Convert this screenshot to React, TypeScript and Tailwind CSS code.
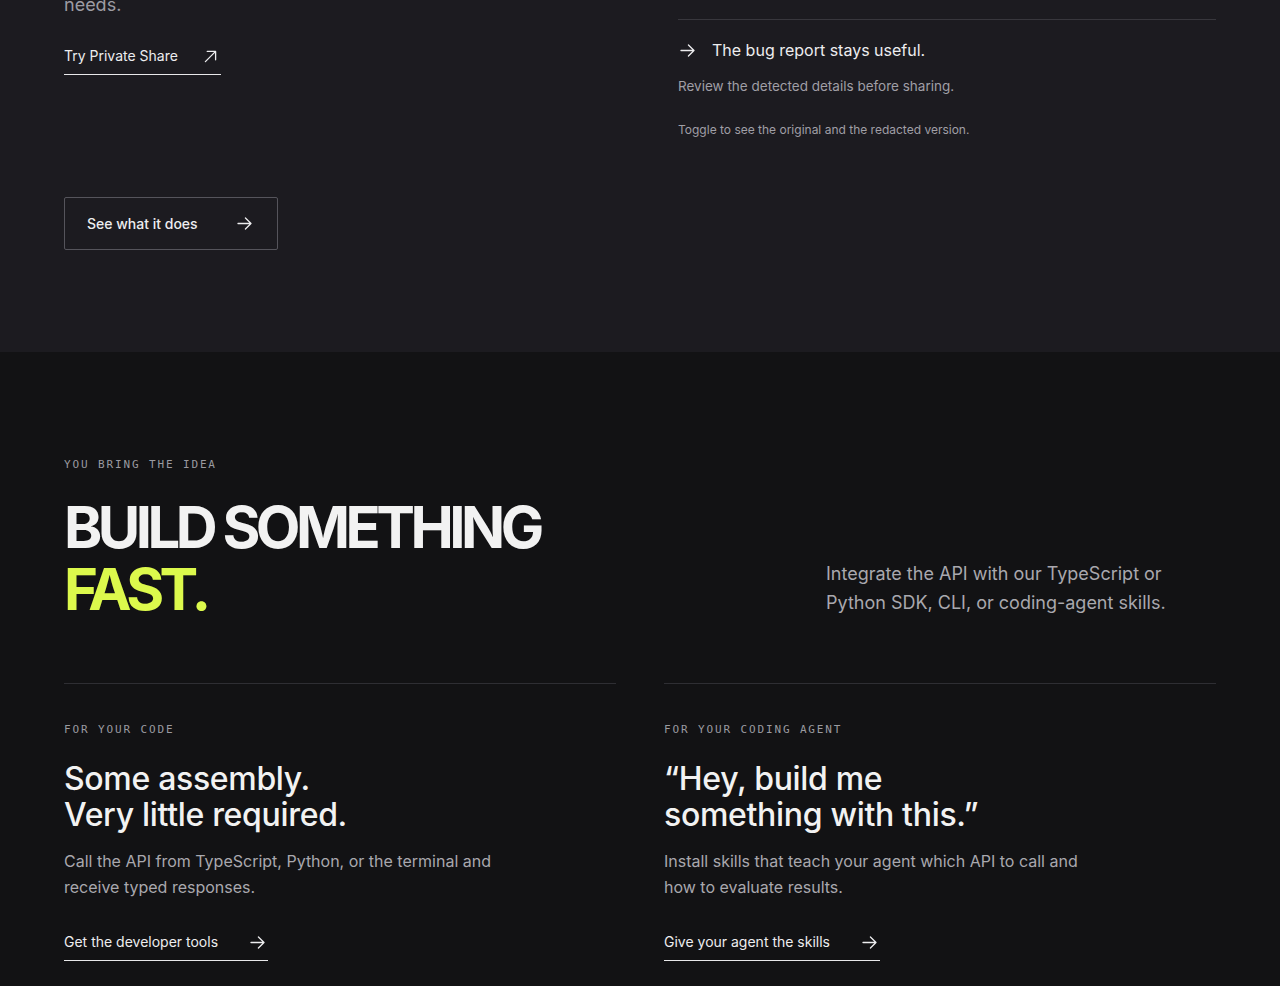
const SANS = 'font-["Inter","Noto_Sans",sans-serif]'
const MONO = 'font-["DejaVu_Sans_Mono","Liberation_Mono",monospace]'

const CARDS = [
  {
    label: 'For your code',
    title: ['Some assembly.', 'Very little required.'],
    body: 'Call the API from TypeScript, Python, or the terminal and receive typed responses.',
    link: 'Get the developer tools',
  },
  {
    label: 'For your coding agent',
    title: ['\u201cHey, build me', 'something with this.\u201d'],
    body: 'Install skills that teach your agent which API to call and how to evaluate results.',
    link: 'Give your agent the skills',
  },
]

function Arrow({ className = '' }: { className?: string }) {
  return (
    <svg viewBox="0 0 16 14" fill="none" stroke="currentColor" strokeWidth={1.4} strokeLinecap="round" strokeLinejoin="round" className={`h-[13px] w-[15px] ${className}`} aria-hidden="true">
      <path d="M1 7h14M9 1l6 6-6 6" />
    </svg>
  )
}

function ArrowOut() {
  return (
    <svg viewBox="0 0 14 14" fill="none" stroke="currentColor" strokeWidth={1.4} strokeLinecap="round" strokeLinejoin="round" className="h-[13px] w-[13px]" aria-hidden="true">
      <path d="M1.5 12.5L12.5 1.5M3.5 1.5h9v9" />
    </svg>
  )
}

function PrivateShare() {
  return (
    <section className="h-[352px] overflow-hidden bg-[#1c1b20] px-16">
      <div className="grid grid-cols-[614px_1fr]">
        <div className="flex flex-col">
          <p className="-mt-[9px] text-[18px] leading-[28px] text-[#9d9ca3]">needs.</p>
          <a className="mt-[27px] flex w-[157px] items-center justify-between border-b border-[#e8e8ea] pb-[8px] pr-[4px] text-[14px] leading-[20px] text-[#ededef]">
            Try Private Share
            <ArrowOut />
          </a>
          <a className="mt-[122px] flex h-[53px] w-[214px] items-center justify-between rounded-[2px] border border-[#55545b] pl-[22px] pr-[25px] text-[14px] font-medium text-[#ededef]">
            See what it does
            <Arrow />
          </a>
        </div>
        <div className="flex flex-col pt-[19px]">
          <div className="border-t border-[#38373d]" />
          <div className="mt-[19px] flex items-center gap-[17px] text-[16px] leading-[22px] text-[#ededef]">
            <Arrow className="ml-[2px]" />
            The bug report stays useful.
          </div>
          <p className="mt-[16px] text-[13.5px] leading-[18px] text-[#a09fa6]">Review the detected details before sharing.</p>
          <p className="mt-[27px] text-[12px] leading-[16px] text-[#a09fa6]">Toggle to see the original and the redacted version.</p>
        </div>
      </div>
    </section>
  )
}

function BuildFast() {
  return (
    <section className="bg-[#121214] px-16 pb-[60px] pt-[105px]">
      <p className={`${MONO} text-[11px] uppercase leading-[16px] tracking-[0.17em] text-[#9a9aa0]`}>You bring the idea</p>
      <div className="mt-[23px] flex items-end justify-between">
        <h2 className="text-[58px] font-bold uppercase leading-[62px] tracking-[-0.078em] text-[#f2f2f2]">
          Build something
          <br />
          <span className="text-[#dcf94c]">Fast.</span>
        </h2>
        <p className="mb-[3px] w-[390px] text-[18px] leading-[29px] text-[#a9a8ae]">
          Integrate the API with our TypeScript or Python SDK, CLI, or coding-agent skills.
        </p>
      </div>
      <div className="mt-[63px] grid grid-cols-2 gap-12">
        {CARDS.map((card) => (
          <div key={card.label} className="flex flex-col border-t border-[#2e2e33] pt-[38px]">
            <p className={`${MONO} text-[11px] uppercase leading-[16px] tracking-[0.17em] text-[#9a9aa0]`}>{card.label}</p>
            <h3 className="mt-[23px] text-[32px] font-medium leading-[36px] tracking-[-0.01em] text-[#f2f2f2]">
              {card.title[0]}
              <br />
              {card.title[1]}
            </h3>
            <p className="mt-[15px] max-w-[440px] text-[16px] leading-[26px] text-[#a9a8ae]">{card.body}</p>
            <a className="mt-[32px] flex w-fit items-center gap-[32px] border-b border-[#e8e8ea] pb-[8px] pr-[3px] text-[14px] leading-[20px] text-[#ededef]">
              {card.link}
              <Arrow />
            </a>
          </div>
        ))}
      </div>
    </section>
  )
}

export default function App() {
  return (
    <main className={`${SANS} min-h-screen bg-[#121214] antialiased`}>
      <PrivateShare />
      <BuildFast />
    </main>
  )
}
